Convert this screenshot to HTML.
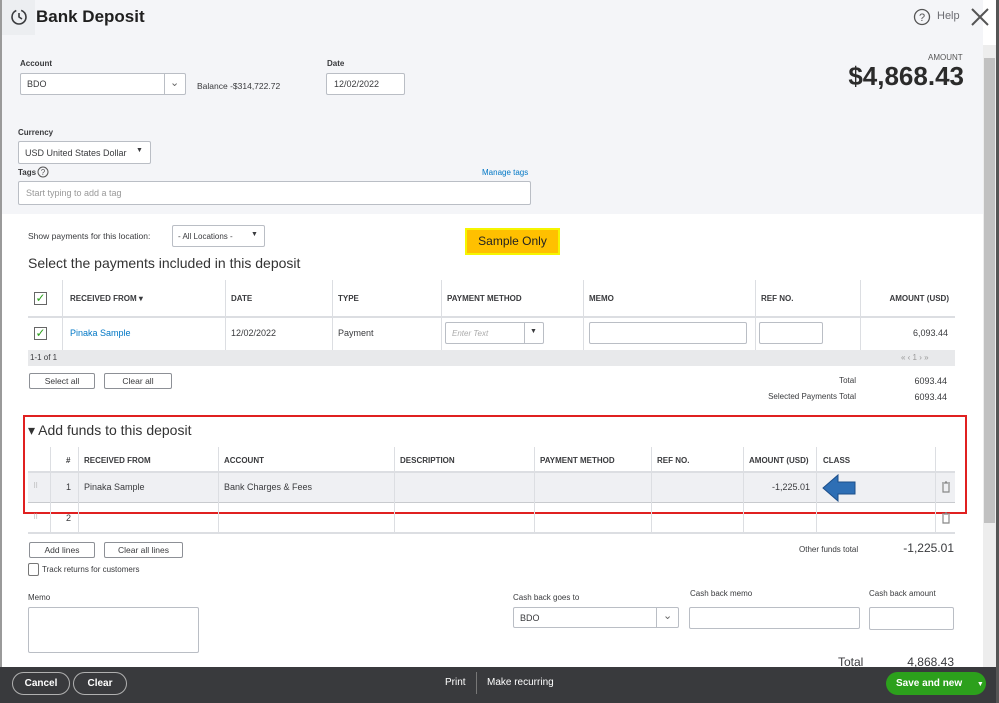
<!DOCTYPE html>
<html><head><meta charset="utf-8"><style>
*{box-sizing:border-box;margin:0;padding:0}
body{width:999px;height:703px;overflow:hidden;position:relative;background:#fff;font-family:"Liberation Sans",sans-serif;color:#393a3d}
.a{position:absolute;white-space:nowrap}
.s{font-size:9px}
.box{position:absolute;border:1px solid #babec5;background:#fff;border-radius:2px}
.btn{position:absolute;border:1px solid #8d9096;background:#fff;border-radius:2px;font-size:8.5px;text-align:center;color:#393a3d}
.th{position:absolute;font-size:8px;font-weight:bold;color:#393a3d}
.vl{position:absolute;width:1px;background:#dcdee2}
</style></head><body>
<div class="a" style="left:0;top:0;width:983px;height:214px;background:#f4f5f8"></div>
<div class="a" style="left:0;top:0;width:2px;height:703px;background:#9a9a9a"></div>
<div class="a" style="left:2px;top:0;width:33px;height:35px;background:#eceef1"></div>
<svg class="a" style="left:9px;top:8px" width="20" height="18" viewBox="0 0 20 18"><circle cx="10" cy="9" r="7" fill="none" stroke="#393a3d" stroke-width="1.6" stroke-dasharray="30 5"/><path d="M10 5v4l3 2" fill="none" stroke="#393a3d" stroke-width="1.6"/></svg>
<div class="a" style="left:36px;top:7px;font-size:17px;font-weight:bold;color:#1f1f1f">Bank Deposit</div>
<svg class="a" style="left:913px;top:8px" width="18" height="18"><circle cx="9" cy="9" r="7.5" fill="none" stroke="#555" stroke-width="1.3"/><text x="9" y="13" font-size="11" text-anchor="middle" fill="#555" font-family="Liberation Sans">?</text></svg>
<div class="a" style="left:937px;top:10px;font-size:11px;color:#6b6c72">Help</div>
<svg class="a" style="left:971px;top:8px" width="18" height="18"><path d="M1 1L17 17M17 1L1 17" stroke="#555" stroke-width="2"/></svg>
<div class="a" style="left:983px;top:45px;width:13px;height:625px;background:#ededed"></div>
<div class="a" style="left:984px;top:58px;width:11px;height:465px;background:#c1c1c1"></div>
<div class="a" style="left:996px;top:0;width:3px;height:703px;background:#555"></div>
<div class="a" style="left:928px;top:53px;font-size:8px;color:#555">AMOUNT</div>
<div class="a" style="right:35px;top:61px;font-size:26px;font-weight:bold;color:#2b2b2b">$4,868.43</div>

<div class="a s" style="left:20px;top:59px;font-weight:bold;font-size:8px">Account</div>
<div class="box" style="left:20px;top:73px;width:166px;height:22px"><span class="a s" style="left:6px;top:5px">BDO</span><div class="vl" style="left:143px;top:0;height:20px;background:#babec5"></div><span class="a" style="left:149px;top:2px;font-size:11px;color:#666">⌄</span></div>
<div class="a" style="left:197px;top:81px;font-size:8.5px">Balance -$314,722.72</div>
<div class="a s" style="left:327px;top:59px;font-weight:bold;font-size:8px">Date</div>
<div class="box" style="left:326px;top:73px;width:79px;height:22px"><span class="a s" style="left:7px;top:5px">12/02/2022</span></div>
<div class="a" style="left:18px;top:128px;font-size:8px;font-weight:bold">Currency</div>
<div class="box" style="left:18px;top:141px;width:133px;height:23px"><span class="a s" style="left:6px;top:6px">USD United States Dollar</span><span class="a" style="left:117px;top:5px;font-size:7px">▼</span></div>
<div class="a" style="left:18px;top:168px;font-size:8px;font-weight:bold">Tags</div>
<svg class="a" style="left:37px;top:166px" width="12" height="12"><circle cx="6" cy="6" r="5" fill="none" stroke="#555"/><text x="6" y="9" font-size="8" text-anchor="middle" fill="#555" font-family="Liberation Sans">?</text></svg>
<div class="a" style="left:482px;top:168px;font-size:8px;color:#0077c5">Manage tags</div>
<div class="box" style="left:18px;top:181px;width:513px;height:24px"><span class="a s" style="left:7px;top:6px;color:#999">Start typing to add a tag</span></div>

<div class="a" style="left:28px;top:231px;font-size:8.5px">Show payments for this location:</div>
<div class="box" style="left:172px;top:225px;width:93px;height:22px"><span class="a" style="left:5px;top:6px;font-size:8px">- All Locations -</span><span class="a" style="left:78px;top:5px;font-size:7px">▼</span></div>
<div class="a" style="left:465px;top:228px;width:95px;height:27px;background:#ffc000;border:2px solid #f5f500;font-size:12px;color:#222;text-align:center;line-height:23px">Sample Only</div>
<div class="a" style="left:28px;top:255px;font-size:14px;color:#333">Select the payments included in this deposit</div>

<div class="a" style="left:28px;top:316px;width:927px;height:2px;background:#dcdee2"></div>
<div class="vl" style="left:62px;top:280px;height:70px"></div><div class="vl" style="left:225px;top:280px;height:70px"></div><div class="vl" style="left:332px;top:280px;height:70px"></div><div class="vl" style="left:441px;top:280px;height:70px"></div><div class="vl" style="left:583px;top:280px;height:70px"></div><div class="vl" style="left:755px;top:280px;height:70px"></div><div class="vl" style="left:860px;top:280px;height:70px"></div>
<div class="a" style="left:34px;top:292px;width:13px;height:13px;border:1px solid #666;color:#2ca01c;font-size:12px;line-height:11px;text-align:center">✓</div>
<div class="th" style="left:70px;top:294px">RECEIVED FROM ▾</div><div class="th" style="left:231px;top:294px">DATE</div><div class="th" style="left:338px;top:294px">TYPE</div><div class="th" style="left:447px;top:294px">PAYMENT METHOD</div><div class="th" style="left:589px;top:294px">MEMO</div><div class="th" style="left:761px;top:294px">REF NO.</div><div class="th" style="right:50px;top:294px">AMOUNT (USD)</div>
<div class="a" style="left:34px;top:327px;width:13px;height:13px;border:1px solid #666;color:#2ca01c;font-size:12px;line-height:11px;text-align:center">✓</div>
<div class="a s" style="left:70px;top:328px;color:#0077c5">Pinaka Sample</div><div class="a s" style="left:231px;top:328px">12/02/2022</div><div class="a s" style="left:338px;top:328px">Payment</div>
<div class="box" style="left:445px;top:322px;width:99px;height:22px"><span class="a" style="left:6px;top:6px;font-size:8px;color:#aaa;font-style:italic">Enter Text</span><div class="vl" style="left:78px;top:0;height:20px;background:#babec5"></div><span class="a" style="left:84px;top:5px;font-size:7px">▼</span></div>
<div class="box" style="left:589px;top:322px;width:158px;height:22px"></div>
<div class="box" style="left:759px;top:322px;width:64px;height:22px"></div>
<div class="a s" style="right:51px;top:328px">6,093.44</div>
<div class="a" style="left:28px;top:350px;width:927px;height:16px;background:#e8e9eb"></div>
<div class="a" style="left:30px;top:353px;font-size:8px">1-1 of 1</div>
<div class="a" style="left:901px;top:353px;font-size:8px;color:#999">« ‹ 1 › »</div>
<div class="btn" style="left:29px;top:373px;width:66px;height:16px;line-height:14px">Select all</div>
<div class="btn" style="left:104px;top:373px;width:68px;height:16px;line-height:14px">Clear all</div>
<div class="a" style="right:143px;top:376px;font-size:8px">Total</div><div class="a s" style="right:52px;top:376px">6093.44</div>
<div class="a" style="right:143px;top:392px;font-size:8px">Selected Payments Total</div><div class="a s" style="right:52px;top:392px">6093.44</div>

<div class="a" style="left:23px;top:415px;width:944px;height:99px;border:2px solid #e02020"></div>
<div class="a" style="left:28px;top:422px;font-size:14px;color:#333">▾ Add funds to this deposit</div>
<div class="a" style="left:28px;top:471px;width:927px;height:2px;background:#dcdee2"></div>
<div class="a" style="left:28px;top:473px;width:927px;height:29px;background:#eff0f3"></div>
<div class="a" style="left:28px;top:502px;width:927px;height:1px;background:#c8cace"></div>
<div class="a" style="left:28px;top:532px;width:927px;height:2px;background:#dcdee2"></div>
<div class="vl" style="left:50px;top:447px;height:86px"></div><div class="vl" style="left:78px;top:447px;height:86px"></div><div class="vl" style="left:218px;top:447px;height:86px"></div><div class="vl" style="left:394px;top:447px;height:86px"></div><div class="vl" style="left:534px;top:447px;height:86px"></div><div class="vl" style="left:651px;top:447px;height:86px"></div><div class="vl" style="left:743px;top:447px;height:86px"></div><div class="vl" style="left:816px;top:447px;height:86px"></div><div class="vl" style="left:935px;top:447px;height:86px"></div>
<div class="th" style="left:66px;top:456px">#</div><div class="th" style="left:84px;top:456px">RECEIVED FROM</div><div class="th" style="left:224px;top:456px">ACCOUNT</div><div class="th" style="left:400px;top:456px">DESCRIPTION</div><div class="th" style="left:540px;top:456px">PAYMENT METHOD</div><div class="th" style="left:657px;top:456px">REF NO.</div><div class="th" style="left:749px;top:456px">AMOUNT (USD)</div><div class="th" style="left:823px;top:456px">CLASS</div>
<div class="a" style="left:33px;top:482px;font-size:7px;color:#aaa">⠿</div><div class="a s" style="left:66px;top:482px">1</div><div class="a s" style="left:84px;top:482px">Pinaka Sample</div><div class="a s" style="left:224px;top:482px">Bank Charges &amp; Fees</div><div class="a s" style="right:189px;top:482px">-1,225.01</div>
<svg class="a" style="left:822px;top:473px" width="34" height="30"><path d="M1 15L16 2V9H33V21H16V28Z" fill="#2e6fb5" stroke="#1c4f8a" stroke-width="1"/></svg>
<svg class="a" style="left:941px;top:481px" width="10" height="12"><path d="M1 2H9M4 1H6M2 3V11H8V3" fill="none" stroke="#888" stroke-width="1.2"/></svg>
<div class="a" style="left:33px;top:513px;font-size:7px;color:#aaa">⠿</div><div class="a s" style="left:66px;top:513px">2</div>
<svg class="a" style="left:941px;top:512px" width="10" height="12"><path d="M1 2H9M4 1H6M2 3V11H8V3" fill="none" stroke="#888" stroke-width="1.2"/></svg>

<div class="btn" style="left:29px;top:542px;width:66px;height:16px;line-height:14px">Add lines</div>
<div class="btn" style="left:104px;top:542px;width:79px;height:16px;line-height:14px">Clear all lines</div>
<div class="a" style="left:799px;top:545px;font-size:8px">Other funds total</div>
<div class="a" style="right:45px;top:541px;font-size:12px">-1,225.01</div>
<div class="a" style="left:28px;top:563px;width:11px;height:13px;border:1px solid #777;border-radius:2px"></div>
<div class="a" style="left:42px;top:565px;font-size:8px">Track returns for customers</div>
<div class="a" style="left:28px;top:593px;font-size:8px">Memo</div>
<div class="box" style="left:28px;top:607px;width:171px;height:46px"></div>
<div class="a" style="left:513px;top:593px;font-size:8px">Cash back goes to</div>
<div class="box" style="left:513px;top:607px;width:166px;height:21px"><span class="a s" style="left:6px;top:5px">BDO</span><div class="vl" style="left:142px;top:0;height:19px;background:#babec5"></div><span class="a" style="left:149px;top:1px;font-size:11px;color:#666">⌄</span></div>
<div class="a" style="left:690px;top:589px;font-size:8px">Cash back memo</div>
<div class="box" style="left:689px;top:607px;width:171px;height:22px"></div>
<div class="a" style="left:869px;top:589px;font-size:8px">Cash back amount</div>
<div class="box" style="left:869px;top:607px;width:85px;height:23px"></div>
<div class="a" style="left:838px;top:655px;font-size:12px">Total</div>
<div class="a" style="right:45px;top:655px;font-size:12px">4,868.43</div>

<div class="a" style="left:0;top:667px;width:996px;height:36px;background:#393a3d"></div>
<div class="a" style="left:12px;top:672px;width:58px;height:23px;border:1px solid #b0b0b0;border-radius:12px;color:#fff;font-size:10px;font-weight:bold;text-align:center;line-height:21px">Cancel</div>
<div class="a" style="left:73px;top:672px;width:54px;height:23px;border:1px solid #b0b0b0;border-radius:12px;color:#fff;font-size:10px;font-weight:bold;text-align:center;line-height:21px">Clear</div>
<div class="a" style="left:445px;top:677px;font-size:10px;color:#fff">Print</div>
<div class="a" style="left:476px;top:672px;width:1px;height:22px;background:#777"></div>
<div class="a" style="left:487px;top:677px;font-size:10px;color:#fff">Make recurring</div>
<div class="a" style="left:886px;top:672px;width:100px;height:23px;background:#2ca01c;border-radius:12px;color:#fff;font-size:10px;font-weight:bold;line-height:23px;padding-left:10px">Save and new <span style="margin-left:12px;font-size:7px">▼</span></div>
</body></html>
